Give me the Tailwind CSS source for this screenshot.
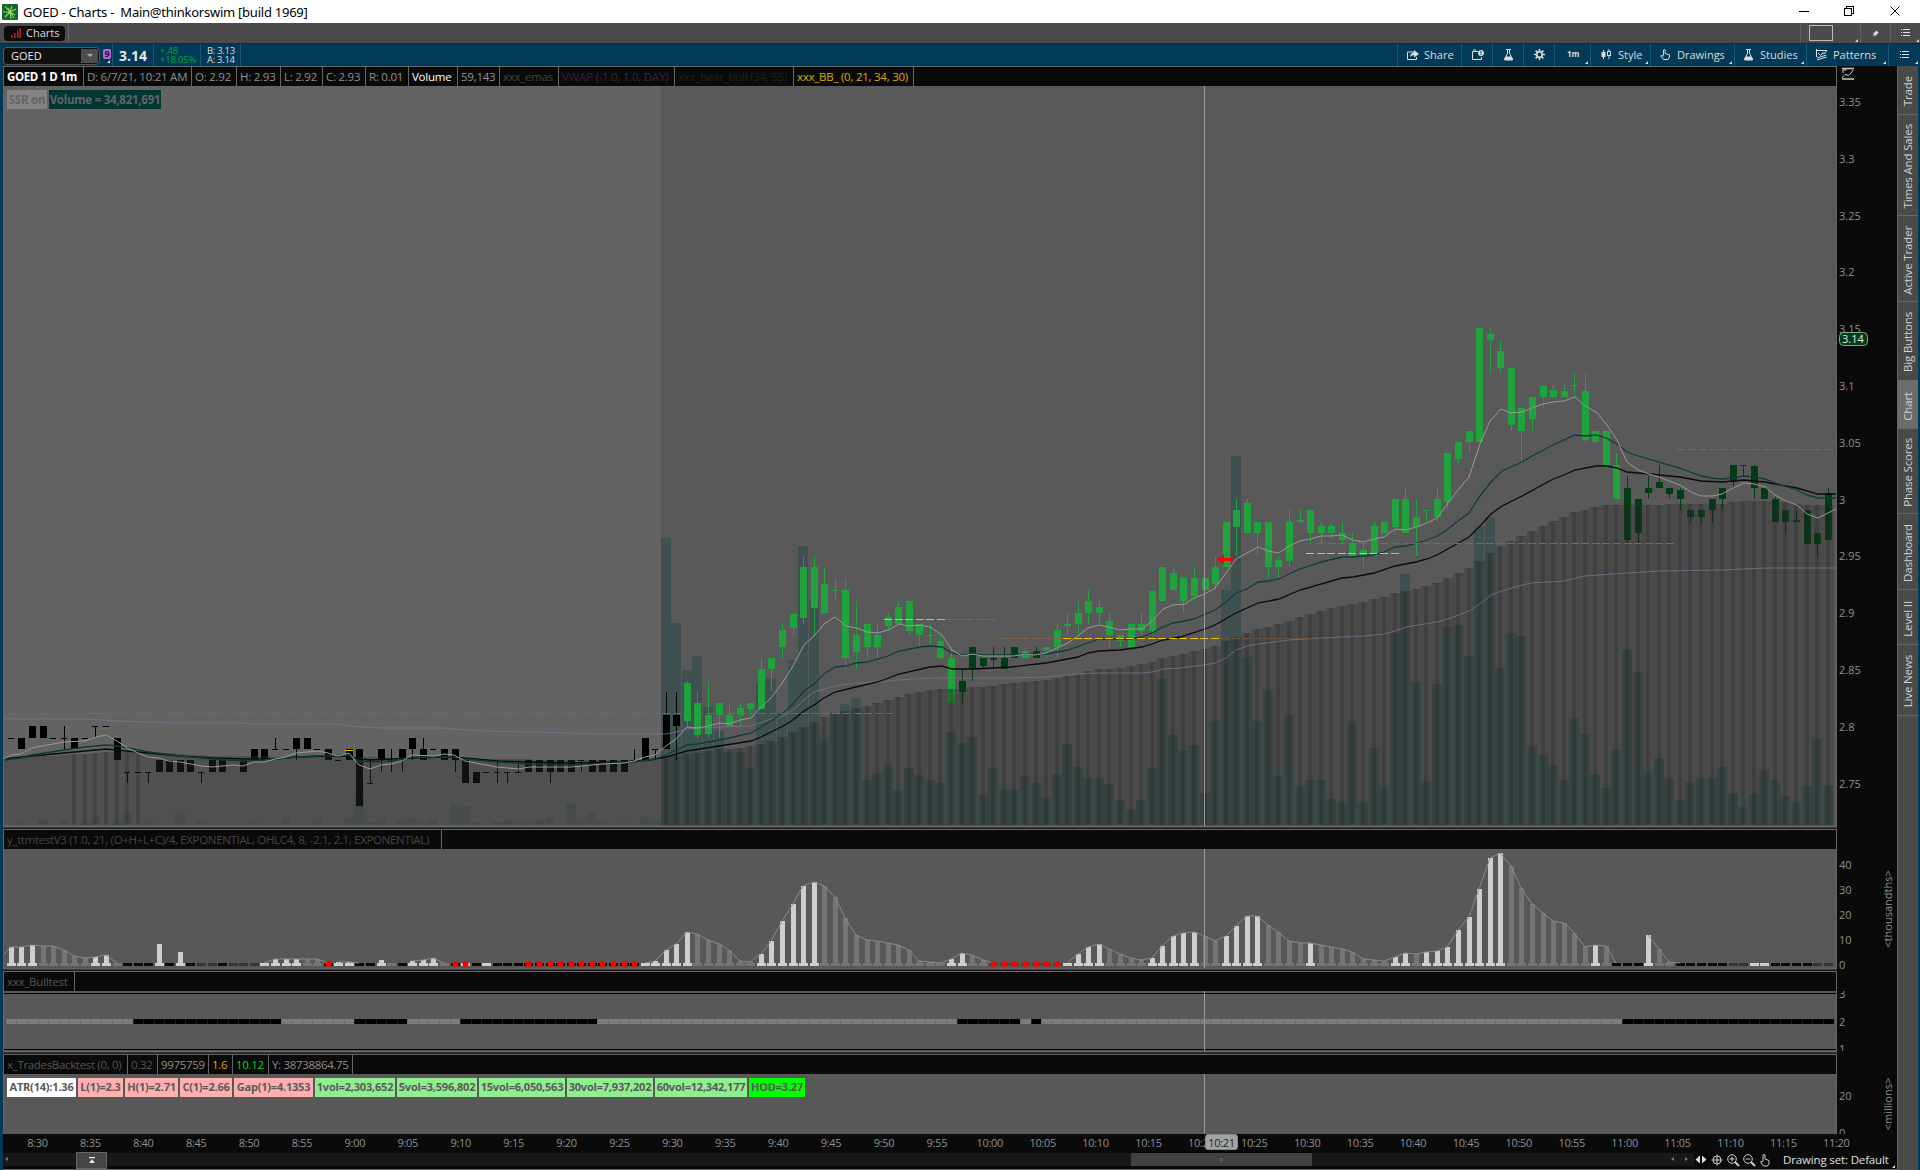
<!DOCTYPE html>
<html lang="en">

<head>
    <meta charset="UTF-8" />
    <meta name="viewport" content="width=device-width, initial-scale=1.0" />
    <title>GOED - Charts - Main@thinkorswim [build 1969]</title>
    <script src="https://cdn.jsdelivr.net/npm/@tailwindcss/browser@4"></script>
</head>

<body class="w-[1920px] h-[1170px] overflow-hidden flex flex-col bg-[#0a0a0a] text-[12px] leading-none text-[#dcdcdc] font-['Open_Sans','Noto_Sans',sans-serif]">

    <!-- window title bar -->
    <header class="h-[23px] shrink-0 bg-white text-black flex items-center justify-between">
        <div class="flex items-center pl-[2px]">
            <svg class="w-4 h-4" viewBox="0 0 16 16">
                <rect width="16" height="16" rx="1" fill="#14662a" />
                <path d="M8 8L3 2M8 8L10 2M8 8L14 5M8 8L13 11M8 8L9 15M8 8L3 13M8 8L1 8M8 8L6 4M8 8L12 14" stroke="#8fdc5a" stroke-width="1.1" />
            </svg>
            <span class="ml-[5px] text-[13px] tracking-[-0.24px] whitespace-pre pt-px font-['Noto_Sans',sans-serif]">GOED - Charts -  Main@thinkorswim [build 1969]</span>
        </div>
        <svg class="w-[121px] h-[22px]" viewBox="1799 0 121 22" fill="none" stroke="#000" shape-rendering="crispEdges">
            <path d="M1799 10.5h10M1844.5 7.500h7v7h-7zM1846.500 7v-1.500h7v7h-2" />
            <path d="M1890.500 5.500l9 9M1899.500 5.500l-9 9" shape-rendering="auto" />
        </svg>
    </header>

    <!-- tab strip -->
    <div class="h-[20px] shrink-0 bg-[#4b4b4b] flex justify-between">
        <div class="w-[69px] border-r border-[#666] flex items-center pl-1">
            <div class="w-[61px] h-[15px] rounded bg-[#0c0c0c] flex items-center pl-[7px] gap-[5px]">
                <svg class="w-[10px] h-[10px]" viewBox="0 0 10 10" fill="#c02222">
                    <path d="M0 7h1.500v3H0zM3 5h1.500v5H3zM6 2.500h1.500V10H6zM8.500 0H10v10H8.500z" />
                </svg>
                <span class="text-[11px] pb-[2px]">Charts</span>
            </div>
        </div>
        <div class="flex">
            <div class="w-[60px] border-l border-[#606060] relative pl-[8px] pt-[2px]">
                <div class="w-[24px] h-[16px] border border-[#bbb]"></div>
                <i class="absolute right-[2px] bottom-[1px] border-l-[3px] border-b-[3px] border-l-transparent border-b-[#ddd]"></i>
            </div>
            <div class="w-[30px] border-l border-[#606060] flex items-center justify-center">
                <svg class="w-[7px] h-[7px]" viewBox="0 0 9 9" fill="#ddd"><path d="M5 0l4 4-1.500.3-2 2L5 8 3.200 6.300 0 9l2.500-3.500L1 4l2-.5 2-2z" /></svg>
            </div>
            <div class="w-[30px] border-l border-[#606060] relative flex items-center justify-center">
                <svg class="w-[9px] h-[8px]" viewBox="0 0 9 8" fill="#ddd" shape-rendering="crispEdges"><path d="M0 0h1v1H0zM2 0h7v1H2zM0 3h1v1H0zM2 3h7v1H2zM0 6h1v1H0zM2 6h7v1H2z" /></svg>
                <i class="absolute right-[1px] bottom-[1px] border-l-[3px] border-b-[3px] border-l-transparent border-b-[#ddd]"></i>
            </div>
        </div>
    </div>

    <!-- symbol toolbar -->
    <div class="h-[23px] shrink-0 bg-[#003a57] flex justify-between border-t border-[#00304a]">
        <div class="flex items-center">
            <div class="ml-[3px] w-[97px] h-[18px] mt-[1px] rounded-sm border border-[#55595c] bg-[#101010] flex items-center justify-between">
                <span class="pl-[7px] pb-px text-[11px] text-[#eee]">GOED</span>
                <span class="w-[17px] h-[14px] bg-[#4d4d4d] mr-px flex items-center justify-center">
                    <i class="border-x-[3px] border-t-[3px] border-x-transparent border-t-[#aaa]"></i>
                </span>
            </div>
            <div class="relative w-[13px] h-full border-r border-[#1c5777] pl-[3px] pt-[5px]">
                <div class="w-[8px] h-[10px] rounded-[2px] bg-[#c45fd0] text-[#2a0a30] text-[9px] leading-[10px] text-center font-bold">9</div>
                <i class="absolute right-[2px] bottom-[3px] border-l-[3px] border-b-[3px] border-l-transparent border-b-[#ddd]"></i>
            </div>
            <div class="w-[41px] h-full border-r border-[#1c5777] text-[14px] font-bold text-[#e6e6e6] flex items-center pl-[6px] pt-[1px]">3.14</div>
            <div class="w-[47px] h-full border-r border-[#1c5777] text-[9.500px] leading-[9px] tracking-[-0.2px] text-[#00a83a] pl-[6px] pt-[2px]">+.48<br>+18.05%</div>
            <div class="w-[40px] h-full border-r border-[#1c5777] text-[9.500px] leading-[9px] pl-[6px] pt-[2px] whitespace-nowrap tracking-[-0.3px]">B: 3.13<br>A: 3.14</div>
        </div>
        <div id="tools" class="flex text-[11px]"></div>
    </div>

    <div class="h-[1104px] flex border-l-[3px] border-r-2 border-[#003a57]">
        <main class="w-[1894px] flex flex-col">
            <div class="flex h-[1068px]">
                <!-- chart panes -->
                <section class="w-[1834px] flex flex-col text-[#8f8f8f]">
                    <div class="border border-[#666] h-[761px]">
                        <div id="head1" class="h-[19px] flex bg-[#0a0a0a] text-[11.500px] tracking-[-0.25px]"></div>
                        <div class="relative">
                            <svg id="price" class="block w-[1832px] h-[740px]" viewBox="4 86 1832 740" shape-rendering="crispEdges"></svg>
                            <div class="absolute left-[3px] top-[4px] flex gap-[2px] font-bold text-[11.500px] tracking-[-0.25px] text-[#646464]">
                                <span class="w-[40px] h-[19px] bg-[#848484] flex items-center justify-center">SSR on</span>
                                <span class="w-[112px] h-[19px] bg-[#003733] flex items-center justify-center whitespace-nowrap">Volume = 34,821,691</span>
                            </div>
                        </div>
                    </div>
                    <div class="h-[2px] bg-[#1a1a1a] border-t border-[#3a3a3a]"></div>
                    <div class="border border-[#666] h-[140px]">
                        <div id="head2" class="h-[19px] flex bg-[#0a0a0a] text-[11.500px] tracking-[-0.33px] text-[#454545]"></div>
                        <svg id="ttm" class="block w-[1832px] h-[119px]" viewBox="4 849 1832 119" shape-rendering="crispEdges"></svg>
                    </div>
                    <div class="h-[2px] bg-[#1a1a1a] border-t border-[#3a3a3a]"></div>
                    <div class="border border-[#666] h-[81px]">
                        <div id="head3" class="h-[19px] flex bg-[#0a0a0a] text-[11.500px] tracking-[-0.25px] text-[#555]"></div>
                        <svg id="bull" class="block w-[1832px] h-[60px]" viewBox="4 991 1832 60" shape-rendering="crispEdges"></svg>
                    </div>
                    <div class="h-[2px] bg-[#1a1a1a] border-t border-[#3a3a3a]"></div>
                    <div class="border-x border-t border-[#666] h-[80px]">
                        <div id="head4" class="h-[19px] flex bg-[#0a0a0a] text-[11.500px] tracking-[-0.33px] text-[#555]"></div>
                        <div class="relative h-[60px] bg-[#585858] pt-[4px] pl-[3px]">
                            <div id="labels" class="flex gap-[2px] font-bold text-[#5a5a5a]"></div>
                            <div class="absolute left-[1200px] top-0 w-px h-full bg-[#9a9a9a]"></div>
                        </div>
                    </div>
                </section>
                <!-- value axis -->
                <svg id="axis" class="w-[60px] h-[1068px]" viewBox="1837 66 60 1068" fill="#8f8f8f" font-size="11"></svg>
            </div>
            <div class="relative h-[19px]">
                <div id="times" class="flex pl-[8px] pb-[2px] h-full items-center text-[11px] text-[#8f8f8f]"></div>
                <div class="absolute left-[1202px] top-0 w-[33px] h-[16px] rounded-[3px] bg-[#a3a3a3] border border-[#888] text-[11px] text-[#222] flex items-center justify-center tracking-[-0.3px]">10:21</div>
            </div>
            <!-- scroll bar and drawing tools -->
            <div class="h-[15px] flex">
                <div class="w-[1691px] h-[13px] bg-[#191919] flex relative">
                    <i class="absolute left-[2px] top-[4px] border-y-[2px] border-r-[3px] border-y-transparent border-r-[#777]"></i>
                    <div class="absolute left-[73px] -top-px w-[31px] h-[17px] bg-[#454545] border border-[#666] flex items-center justify-center">
                        <svg class="w-[8px] h-[7px]" viewBox="0 0 8 7" fill="#e8e8e8"><path d="M1 0h6v1.200H1zM4 2.200L7 6H1z" /></svg>
                    </div>
                    <div class="ml-[1128px] w-[181px] bg-[#424242] flex items-center justify-center gap-px">
                        <i class="w-px h-[4px] bg-[#6c6c6c]"></i><i class="w-px h-[4px] bg-[#6c6c6c]"></i>
                    </div>
                    <i class="absolute left-[1668px] top-[4px] border-y-[2px] border-r-[3px] border-y-transparent border-r-[#777]"></i>
                    <i class="absolute left-[1682px] top-[4px] border-y-[2px] border-l-[3px] border-y-transparent border-l-[#777]"></i>
                </div>
                <svg class="w-[82px] h-[15px]" viewBox="1694 1153 82 15" fill="none" stroke="#ccc">
                    <path d="M1695.500 1159.500l4.500-4v8zM1706.500 1159.500l-4.500-4v8z" fill="#ddd" stroke="none" />
                    <circle cx="1717" cy="1160" r="4" /><path d="M1711.500 1160h11M1717 1154.500v11" />
                    <circle cx="1732" cy="1159" r="4.300" /><path d="M1729.500 1159h5M1732 1156.500v5" /><path d="M1735 1162l4 4" stroke-width="2" />
                    <circle cx="1748" cy="1159" r="4.300" /><path d="M1745.500 1159h5" /><path d="M1751 1162l4 4" stroke-width="2" />
                    <path d="M1763 1161v-6q1-1 2 0v4l4 1.500v3l-1.500 2.500h-4l-3-4z" />
                </svg>
                <div class="w-[121px] relative pl-[7px] pt-[1px] text-[11.500px] tracking-[-0.15px] whitespace-nowrap text-[#e0e0e0]">Drawing set: Default
                    <i class="absolute right-[2px] bottom-0 border-l-[3px] border-b-[3px] border-l-transparent border-b-[#ddd]"></i>
                </div>
            </div>
            <div class="h-[2px] border-b border-[#666]"></div>
        </main>
        <!-- gadget tabs -->
        <nav id="side" class="w-[21px] bg-[#4a4a4a] border-l border-[#666] text-[11.500px] tracking-[-0.15px] text-[#d0d0d0]"></nav>
    </div>

    <script>
        const $ = (id) => document.getElementById(id);

        // toolbar buttons: width, left padding, icon, label, has corner mark
        const flask = '<path d="M3 .5h5M4.500 .5v4M6.500 .5v4M4.500 4.500L1.500 10h8L6.500 4.500"/><path d="M3 8h5l1.500 3h-8z" fill="#ddd"/>';
        const list = '<path d="M1 2.500h1M3 2.500h7M1 5.500h1M3 5.500h7M1 8.500h1M3 8.500h7" shape-rendering="crispEdges"/>';
        const tools = [
            [64, 9, '<path d="M8 3H.5v7.500h9V8"/><path d="M3 8q0-4 4-4.500V1l5 4-5 3.500V6Q5 6 3 8z" fill="#ddd" stroke="none"/>', 'Share', 0],
            [31, 10, '<path d="M6 2.500H.5v8h9V8M1 1h3"/><circle cx="9" cy="4" r="3" fill="#ddd" stroke="none"/><path d="M9 2v2.500M9 5v1" stroke="#003a57"/>', '', 0],
            [31, 10, flask, '', 0],
            [31, 10, '<circle cx="5.500" cy="5.500" r="2.700" stroke-width="1.600"/><path d="M5.500 0v2.500M5.500 8.500V11M0 5.500h2.500M8.500 5.500H11M1.600 1.600L3.300 3.300M7.700 7.700l1.700 1.700M9.400 1.600L7.700 3.300M3.300 7.700L1.600 9.400" stroke-width="1.600"/>', '', 0],
            [36, 12, '', '1m', 1],
            [60, 10, '<path d="M2.500 1v9M8 0v10"/><rect x="1" y="3.500" width="3" height="4" fill="#ddd"/><rect x="6.500" y="2.500" width="3" height="4" fill="#003a57"/>', 'Style', 1],
            [84, 9, '<path d="M3.500 6.500V1q.8-1 1.600 0v3.500l4.400 1.300V8L8 10.500H3.500L.7 6.800q.8-1 2.800.4"/>', 'Drawings', 1],
            [72, 8, flask, 'Studies', 1],
            [82, 9, '<path d="M.5 0v8M.5 1.500h10.500M2 4l2.500 2.500L7 3.500l1 1.500L10.500 2M1 9l9.500-3M1 11l9.500-3"/>', 'Patterns', 1],
            [32, 10, list, '', 1],
        ];
        $('tools').innerHTML = tools.map(([w, pl, icon, label, mark]) => `
            <div class="relative flex items-center gap-[5px] border-l border-[#1c5777]" style="width:${w}px;padding-left:${pl}px">
                ${icon ? `<svg class="w-[12px] h-[12px] shrink-0" viewBox="0 0 12 12" fill="none" stroke="#ddd">${icon}</svg>` : ''}
                <span class="pb-[2px] ${label == '1m' ? 'text-[8px] font-bold' : ''}">${label}</span>
                ${mark ? '<i class="absolute right-[2px] bottom-[2px] border-l-[3px] border-b-[3px] border-l-transparent border-b-[#ddd]"></i>' : ''}
            </div>`).join('');

        // pane header cells: width, text, colour, bold
        function head(id, cells) {
            $(id).innerHTML = cells.map(([w, t, c, b]) =>
                `<div class="border-r border-[#666] h-full flex items-center pl-[3px] whitespace-nowrap ${b ? 'font-bold tracking-[-0.4px]' : ''}" style="width:${w}px;color:${c}">${t}</div>`).join('');
        }
        head('head1', [
            [80, 'GOED 1 D 1m', '#fff', 1], [108, 'D: 6/7/21, 10:21 AM'], [45, 'O: 2.92'], [44, 'H: 2.93'], [42, 'L: 2.92'],
            [43, 'C: 2.93'], [43, 'R: 0.01'], [49, 'Volume', '#fff'], [42, '59,143'], [59, 'xxx_emas', '#444'],
            [116, 'VWAP (-1.0, 1.0, DAY)', '#3a2440'], [119, 'xxx_bear_bull (34, 55)', '#202020'], [120, 'xxx_BB_ (0, 21, 34, 30)', '#d9ae00'],
        ]);
        head('head2', [[438, 'y_ttmtestV3 (1.0, 21, (O+H+L+C)/4, EXPONENTIAL, OHLC4, 8, -2.1, 2.1, EXPONENTIAL)']]);
        head('head3', [[71, 'xxx_Bulltest']]);
        head('head4', [[124, 'x_TradesBacktest (0, 0)'], [30, '0.32'], [51, '9975759', '#8f8f8f'], [24, '1.6', '#d9ae00'], [36, '10.12', '#00d820'], [84, 'Y: 38738864.75', '#8f8f8f']]);

        $('labels').innerHTML = [
            [69, 'ATR(14):1.36', '#fff'], [45, 'L(1)=2.3', '#ffafaf'], [53, 'H(1)=2.71', '#ffafaf'], [52, 'C(1)=2.66', '#ffafaf'],
            [79, 'Gap(1)=4.1353', '#ffafaf'], [80, '1vol=2,303,652', '#90ee90'], [80, '5vol=3,596,802', '#90ee90'],
            [86, '15vol=6,050,563', '#90ee90'], [86, '30vol=7,937,202', '#90ee90'], [92, '60vol=12,342,177', '#90ee90'], [56, 'HOD=3.27', '#00ff00'],
        ].map(([w, t, c]) => `<span class="h-[19px] pb-[2px] flex items-center justify-center whitespace-nowrap text-[11px] tracking-[-0.2px]" style="width:${w}px;background:${c}">${t}</span>`).join('');

        let times = '';
        for (let m = 510; m <= 680; m += 5) {
            times += `<span class="w-[52.92px] shrink-0 text-center tracking-[-0.3px]">${Math.floor(m / 60)}:${String(m % 60).padStart(2, '0')}</span>`;
        }
        $('times').innerHTML = times;

        $('side').innerHTML = [[49, 'Trade'], [101, 'Times And Sales'], [86, 'Active Trader'], [79, 'Big Buttons'], [48, 'Chart'], [85, 'Phase Scores'], [76, 'Dashboard'], [55, 'Level II'], [71, 'Live News']]
            .map(([h, t]) => `<div class="border-b border-[#666] flex items-center justify-center pt-[3px] ${t == 'Chart' ? 'bg-[#6c6c6c]' : ''}" style="height:${h}px"><span class="[writing-mode:vertical-rl] rotate-180 whitespace-nowrap">${t}</span></div>`).join('');

        // ---- chart data, one bar per minute from 8:28 ----
        const X = (i) => Math.floor(11.4 + 10.563 * i);
        const P = (c) => Math.round(726.2 - (c - 10) * 11.365); // cents above 2.70
        const rect = (x, y, w, h, f, o) => `<rect x="${x}" y="${y}" width="${w}" height="${h}" fill="${f}"${o ? ` opacity="${o}"` : ''}/>`;
        const line = (pts, c, w) => `<polyline points="${pts}" fill="none" stroke="${c}" stroke-width="${w}" shape-rendering="auto"/>`;

        // high, body top, body bottom, low
        const candles = [
            [9,9,9,9],[9,9,8,8],[10,10,9,9],[10,10,9,9],[9,9,9,9],[10,9,9,8],[9,9,8,8],[9,9,9,9],[10,10,10,9],[10,10,10,10],
            [9,9,7,7],[6,6,6,5],[6,6,6,6],[6,6,6,5],[7,7,6,6],[7,7,6,6],[7,7,6,6],[7,7,6,6],[6,6,6,5],[7,7,6,6],
            [7,7,6,6],[7,7,7,7],[7,7,6,6],[8,8,7,7],[8,8,7,7],[9,8,8,8],[8,8,8,8],[9,9,8,7],[9,9,8,8],[8,8,8,8],
            [8,8,7,7],[7,7,7,7],[8,8,7,7],[8,8,3,3],[7,5,5,5],[8,8,7,6],[8,7,7,6],[8,8,7,6],[9,9,8,7],[9,8,7,7],
            [8,8,8,8],[8,8,7,7],[8,8,7,6],[7,7,5,5],[6,6,5,5],[6,6,6,6],[7,6,6,5],[6,6,6,5],[7,6,6,6],[7,7,6,6],
            [7,7,6,6],[7,7,6,5],[7,7,6,6],[7,7,6,6],[7,7,7,6],[7,7,6,6],[7,7,6,6],[7,7,6,6],[7,7,6,6],[8,7,7,7],
            [9,9,7,7],[8,8,8,7],[13,11,8,8],[13,11,10,7],[14,13.8,10.5,10],[13,12,9.2,9],[14,11,9.3,9],[12,12,11,9],[12,11,10,10],[12,11.6,11,10],
            [12,12,11.5,11],[16,15,11.5,11.5],[16,16,15,13],[19,18.5,17,16],[20,19.9,18.6,18],[25,24,19.5,19],[25,24,20.4,18],[24,22.5,20,20],[23,22,22,21],[23,22,16,15],
            [21,18,16.5,15],[19,19,17,16],[19,18,17,16],[20,19.6,18.8,18.4],[21,20.5,19,19],[21,21,18.4,18],[19,19,18,17],[19,18,18,17],[18,17.5,16,16],[17,16,12,12],
            [15,14,13,12],[17,17,15,14],[16,16,15.3,15],[17,16,15.8,15],[17,16,15,15],[17,17,16,16],[17,16.6,16,16],[17,16.6,16,16],[17,17,16.7,16],[19,18.5,17,16],
            [20,19,18.8,18],[21,20,19,18],[22,21,20,19],[21,20.5,20,19],[20,19.3,18,17],[18,18,17.5,17],[19,19,17,17],[20,19,18.4,18],[22,21.9,18.4,18],[24,24,21,21],
            [24,23.5,22,22],[23,23,21,20],[24,23,21.5,21],[23,23,22,22],[25,24,22.5,22],[28,28,24,24],[30,29,27.5,25],[30,29.6,27,27],[28,28,27,25],[28,28,24,23],
            [25,24.6,24,23],[29,28,24.5,24],[29,28.1,28,28],[29,29,27,26],[28,27.6,27,26],[28,27.6,27,26.5],[28,27,26.4,26],[27,26,25,25],[26,25.5,25,24],[28,27.6,25,25],
            [28,28,27,27],[30,30,27.5,27],[31,30,27,27],[30,28.4,27.5,25],[29,29,29,28],[31,30,28.4,28],[34,34,29.7,29],[35,35,33.5,33],[36,36,35,34],[45,45,35,35],
            [45,44.5,44,41],[44,43,41.5,41],[41.5,41.5,36.5,36],[38,38,36,33],[39,39,37,36],[40,39.9,39,38],[40,39.6,39,39],[40,39.5,39,39],[41,40,40,39],[41,39.5,35.2,35],
            [36,36,35,35],[36,36,33,33],[34,33,30,30],[32,31,26.4,26],[30,30,27,26],[32,31,30.5,30],[33,31.5,31,31],[31,31,30.4,30],[31,30.8,30,29],[29,29,28.4,28],
            [29,29,28.4,28],[30,30,29,28],[31,31,30,29],[33,33,31.5,31],[33,33,33,32],[33,32.9,31,30],[31,31,30,30],[30.2,30,28,28],[29,29,28,27],[29,28.1,28,28],
            [29,29,26,26],[27,27,26,25],[31,30.5,26.4,26.4],
        ];
        const dark = new Set([90, 91, 92, 93, 94, 95, 97]);

        // volume bar tops (y)
        const volEarly = { 1: 823, 3: 820, 5: 820, 7: 820, 8: 817, 10: 820, 11: 812, 13: 819, 16: 811, 18: 821, 23: 823, 26: 817, 29: 819, 32: 818, 33: 792, 34: 822, 35: 819, 37: 821, 38: 818, 39: 823, 40: 820, 42: 804, 43: 806, 44: 822, 46: 822, 47: 820, 48: 821, 49: 821, 50: 820, 51: 818, 53: 804, 54: 819, 55: 812, 56: 821, 58: 823, 60: 817, 61: 820 };
        const vol = [538,623,670,656,707,731,752,752,768,683,678,713,660,546,601,740,713,704,698,780,773,765,790,768,775,780,783,732,743,737,795,768,789,790,776,783,797,774,744,767,778,779,784,800,810,800,768,679,735,
            750,745,793,721,590,456,657,721,691,776,715,787,780,780,799,803,723,803,748,787,633,574,682,781,684,627,625,656,527,517,668,633,636,747,755,765,780,718,734,774,788,750,650,672,772,758,779,800,782,779,778,767,794,807,794,771,780,796,803,786,739,786];

        const cloudPts = [4,759,64,755,106,752,149,752,212,756,338,757,412,758,497,759,571,760,655,760,666,757,687,754,698,753,708,751,719,749,740,748,751,746,761,744,771,741,783,737,793,732,804,726,814,722,824,717,835,713,846,711,856,708,867,706,878,703,888,700,899,697,909,694,920,692,930,690,941,689,962,689,973,687,993,686,1014,683,1046,680,1068,676,1078,674,1088,671,1099,669,1120,668,1131,666,1142,664,1152,662,1163,658,1185,654,1194,651,1205,649,1215,646,1226,641,1236,637,1247,633,1258,629,1268,627,1289,621,1300,617,1321,611,1331,608,1353,604,1374,599,1384,597,1395,593,1416,589,1437,583,1448,578,1469,568,1479,561,1491,552,1502,545,1522,536,1532,531,1553,521,1575,512,1585,510,1596,507,1606,505,1649,505,1669,504,1722,504,1733,502,1744,501,1775,501,1786,502,1797,504,1807,505,1840,505];
        function cloudY(x) {
            for (let k = 2; k < cloudPts.length; k += 2) {
                if (x <= cloudPts[k]) {
                    const x0 = cloudPts[k - 2], y0 = cloudPts[k - 1];
                    return Math.round(y0 + (cloudPts[k + 1] - y0) * (x - x0) / (cloudPts[k] - x0));
                }
            }
        }

        const fast = "4,759 11,755 21,754 32,748 42,746 53,744 63,742 85,741 96,737 106,735 117,741 127,748 138,753 148,757 159,758 169,761 180,762 191,764 201,766 212,767 222,766 233,765 243,766 254,762 264,762 275,759 286,757 296,753 307,752 317,751 328,753 338,756 349,753 359,765 370,769 381,765 391,764 402,761 412,755 434,756 444,754 454,755 465,761 486,765 497,767 519,769 529,767 549,767 571,767 592,765 603,764 624,763 634,761 645,757 655,755 666,746 676,739 687,727 698,728 708,726 719,723 729,724 740,720 751,718 761,707 771,698 783,682 793,666 804,645 814,636 824,624 835,617 846,626 856,628 867,632 878,633 888,630 899,624 909,626 920,625 930,627 942,635 952,650 962,656 973,654 983,656 1014,656 1025,654 1035,655 1046,653 1057,648 1068,643 1078,636 1088,628 1099,625 1109,627 1120,630 1131,629 1142,629 1152,621 1163,609 1173,605 1185,604 1194,598 1205,594 1215,588 1226,573 1236,559 1247,553 1258,547 1268,551 1279,553 1289,546 1300,541 1310,539 1321,536 1331,536 1342,535 1353,540 1363,542 1374,539 1384,537 1395,529 1406,530 1416,527 1427,523 1437,518 1448,503 1458,490 1469,477 1480,444 1490,421 1501,409 1511,413 1522,412 1532,408 1543,404 1553,402 1564,401 1575,397 1585,406 1596,412 1607,425 1617,440 1627,462 1638,470 1649,474 1659,477 1669,481 1680,485 1691,492 1701,496 1713,496 1722,494 1733,488 1744,483 1754,484 1765,487 1775,495 1786,501 1797,505 1807,514 1818,518 1836,509";
        const mid = "4,760 21,758 32,755 64,750 85,747 106,745 117,746 149,752 180,756 212,759 243,761 264,760 296,757 317,756 349,755 359,761 370,762 391,761 412,757 454,757 465,759 497,762 529,764 571,765 634,762 655,759 666,755 687,745 698,744 719,740 729,738 751,733 761,727 771,721 783,713 793,704 804,691 814,684 824,674 835,667 846,666 856,663 867,662 888,656 899,651 920,647 930,646 942,647 952,653 962,655 973,654 983,655 1011,655 1025,654 1046,654 1068,650 1088,643 1099,639 1131,639 1142,637 1152,633 1163,627 1173,623 1185,621 1194,619 1215,610 1226,602 1236,593 1247,589 1258,582 1268,581 1279,579 1289,574 1300,569 1321,562 1342,557 1353,557 1374,555 1384,552 1395,547 1406,546 1427,540 1437,536 1448,529 1458,521 1469,513 1480,496 1491,482 1502,471 1522,462 1532,456 1553,445 1575,435 1585,436 1596,435 1606,438 1617,444 1627,452 1638,456 1659,462 1680,468 1701,476 1712,478 1722,479 1733,478 1744,476 1754,477 1765,479 1775,483 1797,490 1807,495 1818,498 1836,498";
        const slow = "4,759 32,756 64,753 106,749 126,751 149,753 180,756 212,758 243,759 275,759 296,757 328,756 349,756 359,759 370,760 391,759 412,758 444,757 465,758 497,761 529,762 571,763 624,762 650,760 666,757 687,751 719,746 751,741 761,737 771,732 783,726 793,720 804,711 814,705 824,698 835,692 856,687 878,682 899,674 930,667 942,666 952,669 973,669 1011,667 1046,663 1078,657 1088,653 1099,651 1120,650 1142,647 1152,644 1163,640 1180,637 1205,629 1215,625 1236,613 1258,603 1279,599 1300,590 1342,578 1353,577 1374,573 1395,566 1416,562 1427,559 1437,555 1469,537 1480,526 1491,514 1502,506 1522,496 1553,479 1564,475 1575,470 1596,466 1607,466 1617,468 1627,472 1649,474 1680,477 1701,481 1722,482 1744,480 1765,482 1775,484 1797,488 1818,494 1836,494";
        const vwap = "4,719 85,719 117,721 149,722 180,723 243,723 254,724 338,724 359,727 381,728 444,728 465,730 486,731 529,732 571,733 603,734 666,734 676,732 687,729 698,728 719,727 751,726 771,719 783,716 793,710 804,700 814,692 835,686 856,683 878,682 899,680 930,678 1014,678 1046,677 1078,674 1099,673 1142,673 1152,672 1163,669 1180,668 1194,666 1205,665 1215,663 1226,658 1236,650 1247,646 1258,644 1289,640 1321,638 1363,636 1384,634 1395,631 1406,627 1437,622 1448,619 1469,611 1480,604 1491,595 1502,591 1522,585 1532,583 1564,581 1585,576 1627,573 1659,571 1722,570 1765,568 1836,568";

        function drawPrice() {
            let s = rect(4, 86, 1832, 740, '#595959') + rect(4, 86, 657, 740, '#636363');
            for (const i in volEarly) s += rect(X(+i) - 5, volEarly[i], 10, 825 - volEarly[i], '#003c38', .15);
            vol.forEach((y, k) => { s += rect(X(62 + k) - 5, y, 10, 825 - y, '#003c38', .3); });
            candles.forEach(([h, t, b, l], i) => {
                const c = i < 64 ? '#000' : i >= 153 || dark.has(i) ? '#003c14' : '#1fa33c';
                const x = X(i);
                s += rect(x, P(h), 1, Math.max(1, P(l) - P(h)), c);
                s += rect(x - 3, P(t), t == b ? 6 : 7, Math.max(t == b ? 1 : 2, P(b) - P(t)), c);
            });
            // shaded area below the slow averages
            for (let i = 0; i < 173; i++) {
                const x = i ? X(i) - 5 : 4, n = i < 172 ? X(i + 1) - 5 : 1834, y = cloudY(X(i));
                s += rect(x, y, n - x, 825 - y, '#303030', .36);
                if (i > 61 || (i > 5 && i < 13)) s += rect(X(i) - 2, y, 4, 825 - y, '#000', .14);
            }
            s += line(vwap, '#8c6e96', 1).replace('/>', ' opacity=".75"/>');
            s += line(slow, '#0a0a0a', 1.3) + line(mid, '#0f3c3a', 1.3) + line(fast, '#999', 1);
            const dash = (x1, x2, y, c) => `<path d="M${x1} ${y + .5}H${x2}" stroke="${c}" stroke-dasharray="8 2.57"/>`;
            s += dash(8, 893, 713, '#866648') + dash(945, 998, 619, '#866648') + dash(1001, 1062, 638, '#866648') + dash(1221, 1315, 638, '#6f5640')
                + dash(1317, 1675, 543, '#866648') + dash(1677, 1834, 449, '#866648')
                + dash(884, 946, 619, '#f0c400') + dash(1063, 1221, 638, '#f0c400') + dash(1306, 1400, 553, '#f0c400') + rect(345, 750, 8, 1, '#f0c400');
            s += rect(1204, 86, 1, 740, '#9a9a9a');
            s += '<path d="M1216 559.500l8-5v3.500h9v3h-9v3.500z" fill="#f00" shape-rendering="auto"/>';
            $('price').innerHTML = s;
        }
        drawPrice();

        // squeeze histogram: top y + w rising / g falling; k, d flat; r, R dots
        const ttm = '947w 947w 945w 946g 946g 950g 956g 958g 957w 955w 963g k k k 944w k 952w k d d k d d d 963w 959w 959w 959w 959g 959g r 962w 962w k k 960w 963g k 961w 960w 958w 963g r R k 963w k k k r r r r r r r r r r r 963w 961w ' +
            '950w 944w 932w 934g 940g 944g 950g 961g 962g 954w 941w 921w 904w 886w 882w 886g 897g 918g 935g 940g 941g 943g 945g 950g 961g 962g 963g 959w 953w 955g 960g r r r r r r r 963w 954w 947w 944w 949g 954g 958g 960g 958w 946w 936w 933w 932w 936g 941g 936w 926w 916w 916w 925g ' +
            '932g 941g 943g 943w 945g 947g 949g 952g 959g 960g 961g 957w 953w 954g 952w 951w 947w 930w 917w 889w 858w 853w 866g 888g 904g 913g 921g 923g 933g 947g 945w 946g k k k 935w 949g 962g k k k k k d d 963w 963w k k k k d d';
        const spikes = [14, 16]; // single bars without an outline
        function drawTtm() {
            let s = rect(4, 849, 1832, 119, '#585858');
            const bars = ttm.split(' ').map((cell, i) => [X(i), parseInt(cell) || 0, cell.slice(-1)]);
            bars.forEach(([x, y, kind], i) => {
                const base = { w: '#cfcfcf', g: '#757575', k: '#0a0a0a', d: '#333', r: i < 62 ? '#0a0a0a' : '#444', R: '#cfcfcf' }[kind];
                s += rect(x - 4, 963, 9, 3, base);
                if (y) s += rect(x - 2, y, 5, 966 - y, base);
            });
            let run = ['4,954'];
            bars.forEach(([x, y], i) => {
                const spike = spikes.includes(i);
                if (y && y < 963 && !spike) return run.push(`${x},${y}`);
                if (run.length > 1) s += line(run.join(' ') + ` ${x},963`, '#8a8a8a', 1);
                run = y && !spike ? [`${x},963`] : [];
            });
            bars.forEach(([x, y, kind]) => { if (kind == 'r' || kind == 'R') s += `<circle cx="${x + .5}" cy="964" r="3" fill="#f00" shape-rendering="auto"/>`; });
            s += rect(1204, 849, 1, 119, '#9a9a9a');
            $('ttm').innerHTML = s;
        }
        drawTtm();

        function drawBull() {
            let s = rect(4, 991, 1832, 60, '#585858') + rect(4, 993, 1832, 1, '#000') + rect(4, 1049, 1832, 1, '#000');
            for (let i = 0; i < 173; i++) {
                const off = (i > 11 && i < 26) || (i > 32 && i < 38) || (i > 42 && i < 56) || (i > 89 && i < 96) || i == 97 || i > 152;
                s += rect(X(i) - 5, 1019, 11, 5, off ? '#000' : '#7c7c7c') + rect(X(i) - 5, 1019, 1, 5, off ? '#1c1c1c' : '#6c6c6c');
            }
            $('bull').innerHTML = s + rect(1204, 991, 1, 60, '#9a9a9a');
        }
        drawBull();

        function drawAxis() {
            let s = '';
            for (let k = 0; k < 13; k++) s += `<text x="1839" y="${106 + k * 56.8}">${+(3.35 - k * .05).toFixed(2)}</text>`;
            s += '<rect x="1839.500" y="332.500" width="28" height="13" rx="4" fill="#003c14" stroke="#7aa884"/><text x="1842" y="343" fill="#e6e6e6">3.14</text>';
            [40, 30, 20, 10, 0].forEach((v, k) => { s += `<text x="1839" y="${869 + k * 25}">${v}</text>`; });
            s += '<svg x="1837" y="991" width="30" height="60" viewBox="1837 991 30 60"><text x="1839" y="998">3</text><text x="1839" y="1025.500">2</text><text x="1839" y="1053">1</text></svg>';
            s += '<text x="1839" y="1100">20</text><svg x="1837" y="1120" width="30" height="14" viewBox="1837 1120 30 14"><text x="1839" y="1136.500">0</text></svg>';
            s += '<text transform="translate(1892 909) rotate(-90)" text-anchor="middle">&lt;thousandths&gt;</text><text transform="translate(1892 1104) rotate(-90)" text-anchor="middle">&lt;millions&gt;</text>';
            s += '<path d="M1842 68.500h12M1842 79h12" stroke="#ccc" stroke-width="1.500"/><path d="M1842 78q3-5 5-3t6-5M1843 70v3M1842.500 70h4" stroke="#ccc" fill="none"/>';
            $('axis').innerHTML = s;
        }
        drawAxis();
    </script>
</body>

</html>
